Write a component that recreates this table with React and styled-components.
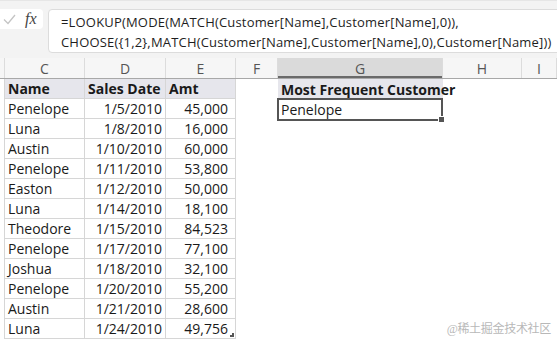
import React from 'react';
import styled, { createGlobalStyle, css } from 'styled-components';

const GlobalStyle = createGlobalStyle`
  html, body {
    margin: 0;
    padding: 0;
    background: #ffffff;
  }
  body {
    width: 557px;
    height: 341px;
    overflow: hidden;
  }
`;

const Page = styled.div`
  position: relative;
  width: 557px;
  height: 341px;
  overflow: hidden;
  background: #ffffff;
  font-family: 'Open Sans', 'Liberation Sans', sans-serif;
`;

const FormulaBar = styled.div`
  display: flex;
  align-items: flex-start;
  gap: 5px;
  height: 52px;
  padding-top: 8px;
  box-sizing: border-box;
  background: #f3f3f3;
  border-top: 1px solid #e6e6e6;
`;

const IconBox = styled.div`
  display: flex;
  align-items: center;
  gap: 9px;
  width: 43px;
  height: 20px;
  padding-left: 3px;
  box-sizing: border-box;
  background: #ffffff;
  border-radius: 0 4px 4px 0;
`;

const FxLabel = styled.span`
  font-family: 'Liberation Serif', serif;
  font-style: italic;
  font-size: 16px;
  color: #444;
  line-height: 1;
`;

const FormulaBox = styled.div`
  flex: 1;
  height: 44px;
  margin-right: -20px;
  padding: 2px 0 0 12px;
  box-sizing: border-box;
  background: #ffffff;
  border: 1px solid #dcdcdc;
  border-radius: 4px;
  font-size: 13px;
  line-height: 20px;
  color: #1e1e1e;
  white-space: nowrap;
  letter-spacing: 0.18px;
`;

const Gap = styled.div`
  height: 6px;
  background: #f3f3f3;
`;

const cols = '5px 80px 81px 70px 42px 165px 79px 1fr';

const HeaderRow = styled.div`
  display: grid;
  grid-template-columns: ${cols};
  height: 20px;
  background: #f6f6f6;
  border-bottom: 1px solid #a8a8a8;
`;

const ColHead = styled.div`
  display: flex;
  align-items: center;
  justify-content: center;
  font-size: 14px;
  color: #555;
  border-right: 1px solid #dcdcdc;
  ${({ $active }) =>
    $active &&
    css`
      background: #dadada;
      box-shadow: inset 0 -2px 0 #6a6a6a;
    `}
`;

const Sheet = styled.div`
  display: grid;
  grid-template-columns: ${cols};
  grid-auto-rows: 20px;
`;

const Cell = styled.div`
  display: flex;
  align-items: center;
  height: 100%;
  font-size: 14px;
  color: #1a1a1a;
  white-space: nowrap;
  box-sizing: border-box;
  padding: 0 3px;
  justify-content: ${({ $right }) => ($right ? 'flex-end' : 'flex-start')};
  ${({ $table }) =>
    $table &&
    css`
      border-right: 1px solid #d6d6d6;
      border-bottom: 1px solid #d6d6d6;
    `}
  ${({ $head }) =>
    $head &&
    css`
      background: #e6e6ec;
      font-weight: 700;
    `}
  ${({ $padRight }) =>
    $padRight &&
    css`
      padding-right: ${$padRight}px;
    `}
`;

const Stub = styled.div`
  border-right: 1px solid #d6d6d6;
`;

const Selected = styled.div`
  position: relative;
  display: flex;
  align-items: center;
  padding: 0 2px;
  font-size: 14px;
  color: #1a1a1a;
  border: 2px solid #555;
  margin: -1px 0 -2px -1px;

  &::after {
    content: '';
    position: absolute;
    right: -4px;
    bottom: -4px;
    width: 5px;
    height: 5px;
    background: #555;
    border: 1px solid #fff;
  }
`;

const Handle = styled.div`
  position: relative;
  &::after {
    content: '';
    position: absolute;
    right: 2px;
    bottom: 2px;
    width: 4px;
    height: 4px;
    border-right: 2px solid #555;
    border-bottom: 2px solid #555;
    box-sizing: border-box;
  }
`;

const Watermark = styled.div`
  position: absolute;
  right: 6px;
  bottom: 4px;
  font-family: 'Liberation Serif', 'Noto Sans CJK SC', serif;
  font-size: 12px;
  color: #b8b8b8;
  letter-spacing: -0.3px;
`;

const rows = [
  ['Penelope', '1/5/2010', '45,000'],
  ['Luna', '1/8/2010', '16,000'],
  ['Austin', '1/10/2010', '60,000'],
  ['Penelope', '1/11/2010', '53,800'],
  ['Easton', '1/12/2010', '50,000'],
  ['Luna', '1/14/2010', '18,100'],
  ['Theodore', '1/15/2010', '84,523'],
  ['Penelope', '1/17/2010', '77,100'],
  ['Joshua', '1/18/2010', '32,100'],
  ['Penelope', '1/20/2010', '55,200'],
  ['Austin', '1/21/2010', '28,600'],
  ['Luna', '1/24/2010', '49,756'],
];

const letters = ['C', 'D', 'E', 'F', 'G', 'H', 'I'];

function Check() {
  return (
    <svg width="13" height="11" viewBox="0 0 13 11">
      <polyline points="1,5.5 5,9.5 12,1" fill="none" stroke="#c4c4c4" strokeWidth="1.3" />
    </svg>
  );
}

export default function App() {
  return (
    <Page>
      <GlobalStyle />
      <FormulaBar>
        <IconBox>
          <Check />
          <FxLabel>fx</FxLabel>
        </IconBox>
        <FormulaBox>
          <div>=LOOKUP(MODE(MATCH(Customer[Name],Customer[Name],0)),</div>
          <div>CHOOSE({'{'}1,2{'}'},MATCH(Customer[Name],Customer[Name],0),Customer[Name]))</div>
        </FormulaBox>
      </FormulaBar>
      <Gap />
      <HeaderRow>
        <ColHead />
        {letters.map(l => (
          <ColHead key={l} $active={l === 'G'}>
            {l}
          </ColHead>
        ))}
      </HeaderRow>
      <Sheet>
        <Stub />
        <Cell $table $head>Name</Cell>
        <Cell $table $head>Sales Date</Cell>
        <Cell $table $head>Amt</Cell>
        <Cell />
        <Cell $head>Most Frequent Customer</Cell>
        <Cell />
        <Cell />
        {rows.map(([name, date, amt], i) => (
          <React.Fragment key={i}>
            <Stub />
            <Cell $table>{name}</Cell>
            <Cell $table $right>{date}</Cell>
            {i === rows.length - 1 ? (
              <Handle>
                <Cell $table $right $padRight={7}>{amt}</Cell>
              </Handle>
            ) : (
              <Cell $table $right $padRight={7}>{amt}</Cell>
            )}
            <Cell />
            {i === 0 ? <Selected>Penelope</Selected> : <Cell />}
            <Cell />
            <Cell />
          </React.Fragment>
        ))}
      </Sheet>
      <Watermark>@稀土掘金技术社区</Watermark>
    </Page>
  );
}
